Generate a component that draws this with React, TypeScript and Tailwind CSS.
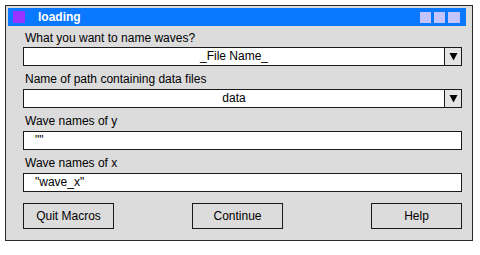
import React from "react"

const font = { fontFamily: '"Liberation Sans", Arial, sans-serif' }

function Label({ text }: { text: string }) {
  return <div className="h-[23px] pl-[2px] pt-[6px] text-[12px] leading-[14px] text-black">{text}</div>
}

function Select({ value }: { value: string }) {
  return (
    <div className="flex h-[19px] w-[439px] border border-[#1a1a1a] bg-white">
      <div className="flex-1 text-center text-[12px] leading-[17px] text-black">{value}</div>
      <div className="flex w-[17px] items-center justify-center border-l border-[#1a1a1a] bg-[#e4e4e4]">
        <svg width="9" height="9" viewBox="0 0 9 9">
          <path d="M0.5 1 L8.5 1 L4.5 8.5 Z" fill="#000" />
        </svg>
      </div>
    </div>
  )
}

function TextBox({ value }: { value: string }) {
  return (
    <div className="h-[19px] w-[439px] border border-[#1a1a1a] bg-white pl-[11px] text-[12px] leading-[17px] text-black">
      {value}
    </div>
  )
}

function Button({ text, className = "" }: { text: string; className?: string }) {
  return (
    <div className={`flex h-[26px] w-[91px] items-center justify-center border border-[#1a1a1a] text-[12px] text-black ${className}`}>
      {text}
    </div>
  )
}

export default function App() {
  return (
    <div className="h-[255px] w-[480px] bg-white pl-[5px] pt-[5px]" style={font}>
      <div className="h-[236px] w-[468px] border border-[#2a2a2a] bg-[#dcdcdc] pl-[2px] pt-[2px]">
        {/* title bar */}
        <div className="flex h-[18px] w-[458px] items-center bg-[#0a78ff] pl-[5px] pr-[6px]">
          <div className="h-[12px] w-[12px] bg-[#9933ff]" />
          <div className="ml-[13px] text-[12px] font-bold leading-[14px] text-white">loading</div>
          <div className="ml-auto flex gap-[3px]">
            <div className="h-[11px] w-[11px] bg-[#c4c4ff]" />
            <div className="h-[11px] w-[11px] bg-[#c4c4ff]" />
            <div className="h-[11px] w-[12px] bg-[#c4c4ff]" />
          </div>
        </div>

        <div className="pl-[15px]">
          <div className="h-[21px] pl-[2px] pt-[5px] text-[12px] leading-[14px] text-black">
            What you want to name waves?
          </div>
          <Select value="_File Name_" />
          <Label text="Name of path containing data files" />
          <Select value="data" />
          <Label text="Wave names of y" />
          <TextBox value={'""'} />
          <Label text="Wave names of x" />
          <TextBox value={'"wave_x"'} />

          <div className="mt-[11px] flex w-[439px]">
            <Button text="Quit Macros" />
            <Button text="Continue" className="ml-[78px]" />
            <Button text="Help" className="ml-auto" />
          </div>
        </div>
      </div>
    </div>
  )
}
